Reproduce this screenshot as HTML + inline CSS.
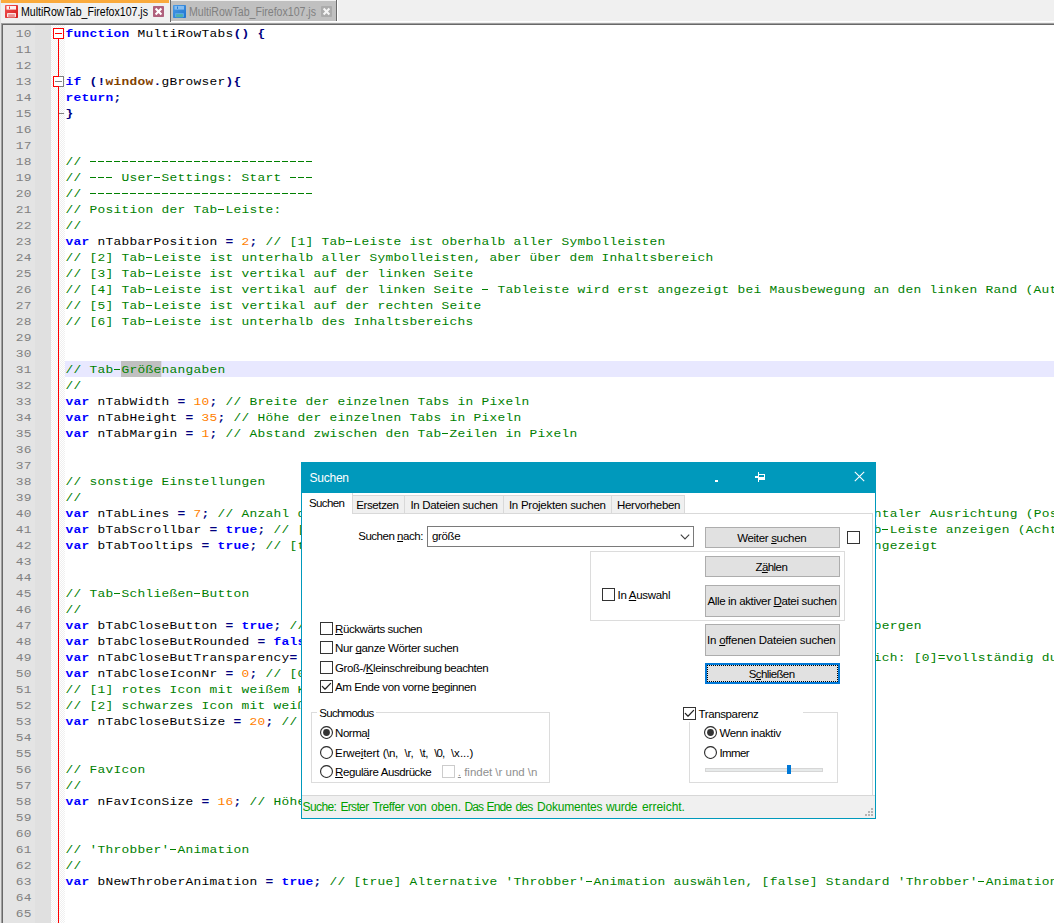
<!DOCTYPE html>
<html lang="de">
<head>
<meta charset="utf-8">
<title>MultiRowTab_Firefox107.js - Notepad++</title>
<style>
html,body{margin:0;padding:0;}
body{width:1054px;height:923px;overflow:hidden;background:#f0f0f0;font-family:"Liberation Sans",sans-serif;}
#app{position:relative;width:1054px;height:923px;overflow:hidden;background:#f0f0f0;}
#app *{box-sizing:border-box;}

/* ---------- document tab bar ---------- */
#tabbar{position:absolute;left:0;top:0;width:1054px;height:23px;background:#f0f0f0;}
#tabbar .edge{position:absolute;left:0;top:0;width:1px;height:923px;background:#e3e3e3;}
.dtab{position:absolute;top:0;height:22px;font-size:12px;white-space:nowrap;}
.dtab .lbl{position:absolute;top:5.8px;line-height:13px;transform-origin:0 50%;transform:scaleX(0.8815);}
#dt1{left:1px;width:169px;background:#f0f0f0;}
#dt1 .bar{position:absolute;left:0;top:0;width:168px;height:3px;background:#faaa3c;}
#dt1 .lbl{left:20px;color:#000;}
#dt2{left:171px;width:165px;background:#c0c0c0;top:1px;height:20px;}
#dt2 .lbl{left:18px;top:4.8px;color:#808080;}
.sep{position:absolute;top:0;width:1px;height:22px;background:#696969;}
.floppy{position:absolute;width:13px;height:13px;}
.xbtn{position:absolute;width:11px;height:11px;}

/* ---------- editor ---------- */
#editor{position:absolute;left:1px;top:23px;width:1060px;height:910px;border-left:1px solid #a0a0a0;border-top:1px solid #a0a0a0;background:#fff;}
#editor:before{content:"";position:absolute;left:0;top:0;width:1060px;height:910px;border-left:1px solid #696969;border-top:1px solid #696969;pointer-events:none;z-index:3;}
#numbers{position:absolute;left:1px;top:1px;width:32px;height:900px;background:#e4e4e4;}
#bookmark{position:absolute;left:33px;top:1px;width:16px;height:900px;background:#e0e0e0;}
#fold{position:absolute;left:49px;top:1px;width:14px;height:900px;background-color:#fff;
  background-image:linear-gradient(45deg,#f0f0f0 25%,transparent 25%,transparent 75%,#f0f0f0 75%),linear-gradient(45deg,#f0f0f0 25%,transparent 25%,transparent 75%,#f0f0f0 75%);
  background-size:2px 2px;background-position:0 0,1px 1px;}
#fold .vline{position:absolute;left:7px;top:14px;width:1px;height:890px;background:#ff0000;}
.fbox{position:absolute;left:2px;width:11px;height:11px;border:1px solid #ff0000;background:#fff;}
.fbox i{position:absolute;left:1px;top:4px;width:7px;height:1px;background:#ff0000;}
.fbox.g{border-color:#808080;}
.fbox.g i{background:#808080;}
.fbox.g b{position:absolute;left:-1px;top:-1px;width:6px;height:11px;border:1px solid #ff0000;border-right:none;}
.ftail{position:absolute;left:7px;width:5px;height:1px;background:#808080;}
#code{position:absolute;left:63px;top:1px;width:1000px;height:900px;}
.no,.ln{position:absolute;height:16px;line-height:18px;font-family:"Liberation Mono",monospace;font-size:11.5px;letter-spacing:0.243px;white-space:pre;transform:scaleX(1.12);}
.no{left:0;width:28.8px;text-align:right;color:#808080;transform-origin:100% 0;}
.ln{left:0;width:1000px;padding-left:0.4px;color:#000;transform-origin:0 0;}
.ln.cur{background:#e8e8ff;}
.k{color:#0000ff;font-weight:bold;}
.o{color:#000080;font-weight:bold;}
.n{color:#ff8000;}
.c{color:#008000;}
.w{color:#804000;font-weight:bold;}
.selbox{position:absolute;left:50px;top:0;width:35.71px;height:16px;background:#c0c0c0;}
.ln span{position:relative;}

/* ---------- "Suchen" dialog ---------- */
#dlg{position:absolute;left:301px;top:462px;width:575px;height:357px;background:#fff;z-index:10;overflow:hidden;}
#dlg .abs{position:absolute;}
#dlg .t{position:absolute;white-space:pre;line-height:14px;}
#dlg u{text-decoration:underline;text-underline-offset:1px;text-decoration-thickness:1px;text-decoration-skip-ink:none;}
.dash{position:absolute;height:1px;background:repeating-linear-gradient(to right,transparent 0,transparent 0.6px,#008000 0.6px,#008000 7.4px,transparent 7.4px,transparent 8px);}

</style>
</head>
<body>
<div id="app">
<div id="tabbar">
<div class="edge"></div>
<div class="dtab" id="dt1">
<div class="bar"></div>
<svg class="floppy" style="left:4px;top:5px" viewBox="0 0 13 13">
<defs><linearGradient id="gr" x1="0" y1="0" x2="1" y2="1"><stop offset="0" stop-color="#f25555"/><stop offset="1" stop-color="#d41818"/></linearGradient></defs>
<rect x="0" y="0" width="13" height="13" rx="0.8" fill="url(#gr)"/>
<rect x="1.5" y="1" width="9.5" height="3.6" fill="#fff" opacity="0.93"/>
<rect x="4" y="1.5" width="1" height="2.4" fill="#ec3a3a"/>
<rect x="2" y="8" width="9" height="4.2" rx="0.8" fill="#fbe3e3"/>
<rect x="3.2" y="9.2" width="6.6" height="3" fill="#eb9090"/>
</svg>
<span class="lbl" id="dl1">MultiRowTab_Firefox107.js</span>
<svg class="xbtn" style="left:152px;top:6px" viewBox="0 0 11 11">
<rect x="0" y="0" width="11" height="11" rx="0.8" fill="#b0607c"/>
<path d="M2.6 2.6 L8.4 8.4 M8.4 2.6 L2.6 8.4" stroke="#fff" stroke-width="2.1" stroke-linecap="butt"/>
</svg>
</div>
<div class="sep" style="left:170px"></div>
<div class="dtab" id="dt2">
<svg class="floppy" style="left:2px;top:4px" viewBox="0 0 13 13">
<defs><linearGradient id="gb" x1="0" y1="0" x2="1" y2="1"><stop offset="0" stop-color="#4a9be6"/><stop offset="1" stop-color="#1f74cf"/></linearGradient></defs>
<rect x="0" y="0" width="13" height="13" rx="0.8" fill="url(#gb)"/>
<rect x="1.5" y="1" width="9.5" height="3.6" fill="#86bdf0"/>
<rect x="4" y="1.5" width="1" height="2.4" fill="#2a7fd6"/>
<rect x="2" y="8" width="9" height="4.2" rx="0.8" fill="#5aa6e6"/>
<rect x="3.2" y="9.2" width="6.6" height="3" fill="#4fb0a8"/>
</svg>
<span class="lbl" id="dl2">MultiRowTab_Firefox107.js</span>
<svg class="xbtn" style="left:150px;top:5px" viewBox="0 0 11 11">
<rect x="0" y="0" width="11" height="11" rx="1" fill="#ababab"/>
<path d="M2.6 2.6 L8.4 8.4 M8.4 2.6 L2.6 8.4" stroke="#f4f4f4" stroke-width="2.1" stroke-linecap="butt"/>
</svg>
</div>
<div class="sep" style="left:336px;height:21px"></div>
<div style="position:absolute;left:337px;top:0;width:1px;height:22px;background:#fff"></div>
<div style="position:absolute;left:171px;top:21px;width:883px;height:1px;background:#fff"></div>
</div>

<div id="editor">
<div id="numbers">
<div class="no" style="top:0px">10</div>
<div class="no" style="top:16px">11</div>
<div class="no" style="top:32px">12</div>
<div class="no" style="top:48px">13</div>
<div class="no" style="top:64px">14</div>
<div class="no" style="top:80px">15</div>
<div class="no" style="top:96px">16</div>
<div class="no" style="top:112px">17</div>
<div class="no" style="top:128px">18</div>
<div class="no" style="top:144px">19</div>
<div class="no" style="top:160px">20</div>
<div class="no" style="top:176px">21</div>
<div class="no" style="top:192px">22</div>
<div class="no" style="top:208px">23</div>
<div class="no" style="top:224px">24</div>
<div class="no" style="top:240px">25</div>
<div class="no" style="top:256px">26</div>
<div class="no" style="top:272px">27</div>
<div class="no" style="top:288px">28</div>
<div class="no" style="top:304px">29</div>
<div class="no" style="top:320px">30</div>
<div class="no" style="top:336px">31</div>
<div class="no" style="top:352px">32</div>
<div class="no" style="top:368px">33</div>
<div class="no" style="top:384px">34</div>
<div class="no" style="top:400px">35</div>
<div class="no" style="top:416px">36</div>
<div class="no" style="top:432px">37</div>
<div class="no" style="top:448px">38</div>
<div class="no" style="top:464px">39</div>
<div class="no" style="top:480px">40</div>
<div class="no" style="top:496px">41</div>
<div class="no" style="top:512px">42</div>
<div class="no" style="top:528px">43</div>
<div class="no" style="top:544px">44</div>
<div class="no" style="top:560px">45</div>
<div class="no" style="top:576px">46</div>
<div class="no" style="top:592px">47</div>
<div class="no" style="top:608px">48</div>
<div class="no" style="top:624px">49</div>
<div class="no" style="top:640px">50</div>
<div class="no" style="top:656px">51</div>
<div class="no" style="top:672px">52</div>
<div class="no" style="top:688px">53</div>
<div class="no" style="top:704px">54</div>
<div class="no" style="top:720px">55</div>
<div class="no" style="top:736px">56</div>
<div class="no" style="top:752px">57</div>
<div class="no" style="top:768px">58</div>
<div class="no" style="top:784px">59</div>
<div class="no" style="top:800px">60</div>
<div class="no" style="top:816px">61</div>
<div class="no" style="top:832px">62</div>
<div class="no" style="top:848px">63</div>
<div class="no" style="top:864px">64</div>
<div class="no" style="top:880px">65</div>
<div class="no" style="top:896px">66</div>
</div>
<div id="bookmark"></div>
<div id="fold">
<div class="vline"></div>
<div class="fbox" style="top:3px"><i></i></div>
<div class="fbox g" style="top:51px"><i></i><b></b></div>
<div class="ftail" style="top:88px;left:8px"></div>
</div>
<div id="code">
<div class="ln" style="top:0px"><span class="k">function</span> MultiRowTabs<span class="o">()</span> <span class="o">{</span></div>
<div class="ln" style="top:16px"></div>
<div class="ln" style="top:32px"></div>
<div class="ln" style="top:48px"><span class="k">if</span> <span class="o">(!</span><span class="w">window</span><span class="o">.</span>gBrowser<span class="o">){</span></div>
<div class="ln" style="top:64px"><span class="k">return</span><span class="o">;</span></div>
<div class="ln" style="top:80px"><span class="o">}</span></div>
<div class="ln" style="top:96px"></div>
<div class="ln" style="top:112px"></div>
<div class="ln" style="top:128px"><span class="c">//                             </span></div>
<div class="ln" style="top:144px"><span class="c">//     User Settings: Start    </span></div>
<div class="ln" style="top:160px"><span class="c">//                             </span></div>
<div class="ln" style="top:176px"><span class="c">// Position der Tab Leiste:</span></div>
<div class="ln" style="top:192px"><span class="c">//</span></div>
<div class="ln" style="top:208px"><span class="k">var</span> nTabbarPosition <span class="o">=</span> <span class="n">2</span><span class="o">;</span> <span class="c">// [1] Tab Leiste ist oberhalb aller Symbolleisten</span></div>
<div class="ln" style="top:224px"><span class="c">// [2] Tab Leiste ist unterhalb aller Symbolleisten, aber über dem Inhaltsbereich</span></div>
<div class="ln" style="top:240px"><span class="c">// [3] Tab Leiste ist vertikal auf der linken Seite</span></div>
<div class="ln" style="top:256px"><span class="c">// [4] Tab Leiste ist vertikal auf der linken Seite   Tableiste wird erst angezeigt bei Mausbewegung an den linken Rand (Auto Hide)</span></div>
<div class="ln" style="top:272px"><span class="c">// [5] Tab Leiste ist vertikal auf der rechten Seite</span></div>
<div class="ln" style="top:288px"><span class="c">// [6] Tab Leiste ist unterhalb des Inhaltsbereichs</span></div>
<div class="ln" style="top:304px"></div>
<div class="ln" style="top:320px"></div>
<div class="ln cur" style="top:336px"><div class="selbox"></div><span class="c">// Tab Größenangaben</span></div>
<div class="ln" style="top:352px"><span class="c">//</span></div>
<div class="ln" style="top:368px"><span class="k">var</span> nTabWidth <span class="o">=</span> <span class="n">10</span><span class="o">;</span> <span class="c">// Breite der einzelnen Tabs in Pixeln</span></div>
<div class="ln" style="top:384px"><span class="k">var</span> nTabHeight <span class="o">=</span> <span class="n">35</span><span class="o">;</span> <span class="c">// Höhe der einzelnen Tabs in Pixeln</span></div>
<div class="ln" style="top:400px"><span class="k">var</span> nTabMargin <span class="o">=</span> <span class="n">1</span><span class="o">;</span> <span class="c">// Abstand zwischen den Tab Zeilen in Pixeln</span></div>
<div class="ln" style="top:416px"></div>
<div class="ln" style="top:432px"></div>
<div class="ln" style="top:448px"><span class="c">// sonstige Einstellungen</span></div>
<div class="ln" style="top:464px"><span class="c">//</span></div>
<div class="ln" style="top:480px"><span class="k">var</span> nTabLines <span class="o">=</span> <span class="n">7</span><span class="o">;</span> <span class="c">// Anzahl der Tab Zeilen                                                    horizontaler Ausrichtung (Position 1 und 2)</span></div>
<div class="ln" style="top:496px"><span class="k">var</span> bTabScrollbar <span class="o">=</span> <span class="k">true</span><span class="o">;</span> <span class="c">// [true] Scrollbar                                                      Tab Leiste anzeigen (Achtung: nur bei)</span></div>
<div class="ln" style="top:512px"><span class="k">var</span> bTabTooltips <span class="o">=</span> <span class="k">true</span><span class="o">;</span> <span class="c">// [true] Tooltips                                                         angezeigt</span></div>
<div class="ln" style="top:528px"></div>
<div class="ln" style="top:544px"></div>
<div class="ln" style="top:560px"><span class="c">// Tab Schließen Button</span></div>
<div class="ln" style="top:576px"><span class="c">//</span></div>
<div class="ln" style="top:592px"><span class="k">var</span> bTabCloseButton <span class="o">=</span> <span class="k">true</span><span class="o">;</span> <span class="c">// [true]                                                             verbergen</span></div>
<div class="ln" style="top:608px"><span class="k">var</span> bTabCloseButRounded <span class="o">=</span> <span class="k">false</span><span class="o">;</span> <span class="c">// [true]</span></div>
<div class="ln" style="top:624px"><span class="k">var</span> nTabCloseButTransparency<span class="o">=</span> <span class="n">9</span><span class="o">;</span> <span class="c">// Transparenz                                                  Bereich: [0]=vollständig durchsichtig</span></div>
<div class="ln" style="top:640px"><span class="k">var</span> nTabCloseIconNr <span class="o">=</span> <span class="n">0</span><span class="o">;</span> <span class="c">// [0] Standard</span></div>
<div class="ln" style="top:656px"><span class="c">// [1] rotes Icon mit weißem Kreuz</span></div>
<div class="ln" style="top:672px"><span class="c">// [2] schwarzes Icon mit weißem Kreuz</span></div>
<div class="ln" style="top:688px"><span class="k">var</span> nTabCloseButSize <span class="o">=</span> <span class="n">20</span><span class="o">;</span> <span class="c">// Größe</span></div>
<div class="ln" style="top:704px"></div>
<div class="ln" style="top:720px"></div>
<div class="ln" style="top:736px"><span class="c">// FavIcon</span></div>
<div class="ln" style="top:752px"><span class="c">//</span></div>
<div class="ln" style="top:768px"><span class="k">var</span> nFavIconSize <span class="o">=</span> <span class="n">16</span><span class="o">;</span> <span class="c">// Höhe und Breite</span></div>
<div class="ln" style="top:784px"></div>
<div class="ln" style="top:800px"></div>
<div class="ln" style="top:816px"><span class="c">// 'Throbber' Animation</span></div>
<div class="ln" style="top:832px"><span class="c">//</span></div>
<div class="ln" style="top:848px"><span class="k">var</span> bNewThroberAnimation <span class="o">=</span> <span class="k">true</span><span class="o">;</span> <span class="c">// [true] Alternative 'Throbber' Animation auswählen, [false] Standard 'Throbber' Animation</span></div>
<div class="ln" style="top:864px"></div>
<div class="ln" style="top:880px"></div>
<div class="ln" style="top:896px"></div>
<div class="dash" style="left:24px;top:136px;width:224px"></div>
<div class="dash" style="left:24px;top:152px;width:24px"></div>
<div class="dash" style="left:88px;top:152px;width:8px"></div>
<div class="dash" style="left:224px;top:152px;width:24px"></div>
<div class="dash" style="left:24px;top:168px;width:224px"></div>
<div class="dash" style="left:152px;top:184px;width:8px"></div>
<div class="dash" style="left:280px;top:216px;width:8px"></div>
<div class="dash" style="left:80px;top:232px;width:8px"></div>
<div class="dash" style="left:80px;top:248px;width:8px"></div>
<div class="dash" style="left:80px;top:264px;width:8px"></div>
<div class="dash" style="left:416px;top:264px;width:8px"></div>
<div class="dash" style="left:1000px;top:264px;width:8px"></div>
<div class="dash" style="left:80px;top:280px;width:8px"></div>
<div class="dash" style="left:80px;top:296px;width:8px"></div>
<div class="dash" style="left:48px;top:344px;width:8px"></div>
<div class="dash" style="left:376px;top:408px;width:8px"></div>
<div class="dash" style="left:288px;top:488px;width:8px"></div>
<div class="dash" style="left:816px;top:504px;width:8px"></div>
<div class="dash" style="left:48px;top:568px;width:8px"></div>
<div class="dash" style="left:128px;top:568px;width:8px"></div>
<div class="dash" style="left:104px;top:824px;width:8px"></div>
<div class="dash" style="left:520px;top:856px;width:8px"></div>
<div class="dash" style="left:912px;top:856px;width:8px"></div>
</div>
</div>
<div id="dlg">
<div class="abs" style="left:0px;top:0px;width:575px;height:31px;background:#0099bc;"></div>
<span class="t" id="t_title" style="left:8.60px;top:8.84px;font-size:12px;color:#fff;letter-spacing:-0.251px;">Suchen</span>
<div class="abs" style="left:414px;top:18px;width:3px;height:2px;background:#fff;"></div>
<svg class="abs" viewBox="0 0 11 11" width="11" height="11" style="left:454px;top:10px" shape-rendering="crispEdges"><rect x="3" y="0" width="1" height="10" fill="#fff"/><rect x="0" y="4" width="3" height="2" fill="#fff"/><rect x="4" y="2" width="6" height="1" fill="#fff"/><rect x="9" y="2" width="1" height="6" fill="#fff"/><rect x="4" y="5" width="6" height="3" fill="#fff"/></svg>
<svg class="abs" viewBox="0 0 11 11" width="11" height="11" style="left:553px;top:9px"><path d="M0.8 0.8 L10.2 10.2 M10.2 0.8 L0.8 10.2" stroke="#fff" stroke-width="1.1" fill="none"/></svg>
<div class="abs" style="left:51px;top:33px;width:333px;height:19px;background:#f0f0f0;border-top:1px solid #d9d9d9;"></div>
<div class="abs" style="left:103px;top:33px;width:1px;height:19px;background:#d9d9d9;"></div>
<div class="abs" style="left:202px;top:33px;width:1px;height:19px;background:#d9d9d9;"></div>
<div class="abs" style="left:310px;top:33px;width:1px;height:19px;background:#d9d9d9;"></div>
<div class="abs" style="left:383px;top:33px;width:1px;height:19px;background:#d9d9d9;"></div>
<div class="abs" style="left:51px;top:31px;width:1px;height:21px;background:#d9d9d9;"></div>
<div class="abs" style="left:51px;top:51px;width:521px;height:1px;background:#d9d9d9;"></div>
<div class="abs" style="left:571px;top:51px;width:1px;height:283px;background:#d9d9d9;"></div>
<span class="t" id="t_tab1" style="left:8.00px;top:34.02px;font-size:11.5px;color:#000;letter-spacing:-0.603px;">Suchen</span>
<span class="t" id="t_tab2" style="left:55.30px;top:36.02px;font-size:11.5px;color:#000;letter-spacing:-0.399px;">Ersetzen</span>
<span class="t" id="t_tab3" style="left:109.40px;top:36.02px;font-size:11.5px;color:#000;letter-spacing:-0.324px;">In Dateien suchen</span>
<span class="t" id="t_tab4" style="left:207.90px;top:36.02px;font-size:11.5px;color:#000;letter-spacing:-0.256px;">In Projekten suchen</span>
<span class="t" id="t_tab5" style="left:316.00px;top:36.02px;font-size:11.5px;color:#000;letter-spacing:-0.299px;">Hervorheben</span>
<span class="t" id="t_lbl" style="left:57.20px;top:67.02px;font-size:11.5px;color:#000;letter-spacing:-0.472px;">Suchen <u>n</u>ach:</span>
<div class="abs" style="left:126px;top:64px;width:267px;height:21px;border:1px solid #7a7a7a;background:#fff;"><svg viewBox="0 0 10 6" width="10" height="6" style="position:absolute;left:252px;top:6.6px"><path d="M0.8 0.7 L5 4.9 L9.2 0.7" fill="none" stroke="#404040" stroke-width="1.1"/></svg></div>
<span class="t" id="t_val" style="left:131.10px;top:67.02px;font-size:11.5px;color:#000;letter-spacing:-0.389px;">größe</span>
<div class="abs" style="left:404px;top:65px;width:135px;height:21px;border:1px solid #adadad;background:#e1e1e1;"></div>
<span class="t" id="b_next" style="left:436.20px;top:69.02px;font-size:11.5px;color:#000;letter-spacing:-0.324px;">Weiter <u>s</u>uchen</span>
<div class="abs" style="left:546px;top:69px;width:13px;height:13px;border:1px solid #333333;background:#fff;"></div>
<div class="abs" style="left:289px;top:89px;width:255px;height:70px;border:1px solid #dcdcdc;"></div>
<div class="abs" style="left:301px;top:126px;width:13px;height:13px;border:1px solid #333333;background:#fff;"></div>
<span class="t" id="t_insel" style="left:316.50px;top:126.02px;font-size:11.5px;color:#000;letter-spacing:-0.294px;">In <u>A</u>uswahl</span>
<div class="abs" style="left:404px;top:94px;width:135px;height:21px;border:1px solid #adadad;background:#e1e1e1;"></div>
<span class="t" id="b_count" style="left:454.40px;top:98.02px;font-size:11.5px;color:#000;letter-spacing:-0.548px;">Z<u>ä</u>hlen</span>
<div class="abs" style="left:404px;top:123px;width:135px;height:32px;border:1px solid #adadad;background:#e1e1e1;"></div>
<span class="t" id="b_all" style="left:406.40px;top:132.02px;font-size:11.5px;color:#000;letter-spacing:-0.344px;">Alle in aktiver <u>D</u>atei suchen</span>
<div class="abs" style="left:404px;top:162px;width:135px;height:32px;border:1px solid #adadad;background:#e1e1e1;"></div>
<span class="t" id="b_open" style="left:406.00px;top:171.02px;font-size:11.5px;color:#000;letter-spacing:-0.224px;">In <u>o</u>ffenen Dateien suchen</span>
<div class="abs" style="left:404px;top:201px;width:135px;height:21px;border:2px solid #0078d7;background:#e1e1e1;"><div class="abs" style="left:0;top:0;right:0;bottom:0;border:1px dotted #000;"></div></div>
<span class="t" id="b_close" style="left:447.80px;top:205.02px;font-size:11.5px;color:#000;letter-spacing:-0.616px;">S<u>c</u>hließen</span>
<div class="abs" style="left:19px;top:160px;width:13px;height:13px;border:1px solid #333333;background:#fff;"></div>
<span class="t" id="t_c1" style="left:34.10px;top:160.02px;font-size:11.5px;color:#000;letter-spacing:-0.442px;"><u>R</u>ückwärts suchen</span>
<div class="abs" style="left:19px;top:179px;width:13px;height:13px;border:1px solid #333333;background:#fff;"></div>
<span class="t" id="t_c2" style="left:34.10px;top:179.02px;font-size:11.5px;color:#000;letter-spacing:-0.338px;">Nur <u>g</u>anze Wörter suchen</span>
<div class="abs" style="left:19px;top:199px;width:13px;height:13px;border:1px solid #333333;background:#fff;"></div>
<span class="t" id="t_c3" style="left:34.10px;top:199.02px;font-size:11.5px;color:#000;letter-spacing:-0.416px;">Groß-/<u>K</u>leinschreibung beachten</span>
<div class="abs" style="left:19px;top:218px;width:13px;height:13px;border:1px solid #333333;background:#fff;"><svg viewBox="0 0 13 13" width="13" height="13" style="position:absolute;left:-1px;top:-1px"><path d="M2.3 6.4 L5.0 9.2 L10.6 3.4" fill="none" stroke="#222" stroke-width="1.25" stroke-linecap="round" stroke-linejoin="round"/></svg></div>
<span class="t" id="t_c4" style="left:34.10px;top:218.02px;font-size:11.5px;color:#000;letter-spacing:-0.406px;">Am Ende von vorne <u>b</u>eginnen</span>
<div class="abs" style="left:10px;top:250px;width:239px;height:71px;border:1px solid #dcdcdc;"></div>
<div class="abs" style="left:16px;top:246px;width:59px;height:12px;background:#fff;"></div>
<span class="t" id="t_gm" style="left:18.30px;top:244.02px;font-size:11.5px;color:#000;letter-spacing:-0.737px;">Suchmodus</span>
<svg class="abs" viewBox="0 0 13 13" width="13" height="13" style="left:19px;top:264px"><circle cx="6.5" cy="6.5" r="5.95" fill="#fff" stroke="#333" stroke-width="1.15"/><circle cx="6.5" cy="6.5" r="3.4" fill="#333"/></svg>
<span class="t" id="t_r1" style="left:34.10px;top:264.02px;font-size:11.5px;color:#000;letter-spacing:-0.496px;">Norma<u>l</u></span>
<svg class="abs" viewBox="0 0 13 13" width="13" height="13" style="left:19px;top:284px"><circle cx="6.5" cy="6.5" r="5.95" fill="#fff" stroke="#333" stroke-width="1.15"/></svg>
<span class="t" id="t_r2_0" style="left:34.10px;top:284.02px;font-size:11.5px;color:#000;letter-spacing:-0.121px;">Erwe<u>i</u>tert</span>
<span class="t" id="t_r2_1" style="left:81.80px;top:284.02px;font-size:11.5px;color:#000;letter-spacing:-0.431px;">(\n,</span>
<span class="t" id="t_r2_2" style="left:103.40px;top:284.02px;font-size:11.5px;color:#000;letter-spacing:-0.131px;">\r,</span>
<span class="t" id="t_r2_3" style="left:118.80px;top:284.02px;font-size:11.5px;color:#000;letter-spacing:-0.465px;">\t,</span>
<span class="t" id="t_r2_4" style="left:133.20px;top:284.02px;font-size:11.5px;color:#000;letter-spacing:-0.866px;">\0,</span>
<span class="t" id="t_r2_5" style="left:149.90px;top:284.02px;font-size:11.5px;color:#000;letter-spacing:0.021px;">\x...)</span>
<svg class="abs" viewBox="0 0 13 13" width="13" height="13" style="left:19px;top:303px"><circle cx="6.5" cy="6.5" r="5.95" fill="#fff" stroke="#333" stroke-width="1.15"/></svg>
<span class="t" id="t_r3" style="left:34.10px;top:303.02px;font-size:11.5px;color:#000;letter-spacing:-0.410px;"><u>R</u>eguläre Ausdrücke</span>
<div class="abs" style="left:141px;top:303px;width:13px;height:13px;border:1px solid #cccccc;background:#fff;"></div>
<span class="t" id="t_dot" style="left:156.80px;top:303.02px;font-size:11.5px;color:#8f8f8f;letter-spacing:-0.018px;"><u>.</u> findet \r und \n</span>
<div class="abs" style="left:388px;top:250px;width:149px;height:71px;border:1px solid #dcdcdc;"></div>
<div class="abs" style="left:381px;top:243px;width:121px;height:17px;background:#fff;"></div>
<div class="abs" style="left:382px;top:245px;width:13px;height:13px;border:1px solid #333333;background:#fff;"><svg viewBox="0 0 13 13" width="13" height="13" style="position:absolute;left:-1px;top:-1px"><path d="M2.3 6.4 L5.0 9.2 L10.6 3.4" fill="none" stroke="#222" stroke-width="1.25" stroke-linecap="round" stroke-linejoin="round"/></svg></div>
<span class="t" id="t_tr" style="left:397.50px;top:245.02px;font-size:11.5px;color:#000;letter-spacing:-0.376px;">Transparenz</span>
<svg class="abs" viewBox="0 0 13 13" width="13" height="13" style="left:403px;top:264px"><circle cx="6.5" cy="6.5" r="5.95" fill="#fff" stroke="#333" stroke-width="1.15"/><circle cx="6.5" cy="6.5" r="3.4" fill="#333"/></svg>
<span class="t" id="t_tr1" style="left:418.40px;top:264.02px;font-size:11.5px;color:#000;letter-spacing:-0.353px;">Wenn inaktiv</span>
<svg class="abs" viewBox="0 0 13 13" width="13" height="13" style="left:403px;top:284px"><circle cx="6.5" cy="6.5" r="5.95" fill="#fff" stroke="#333" stroke-width="1.15"/></svg>
<span class="t" id="t_tr2" style="left:418.40px;top:284.02px;font-size:11.5px;color:#000;letter-spacing:-0.619px;">Immer</span>
<div class="abs" style="left:404px;top:306px;width:118px;height:4px;background:#e7eaea;border:1px solid #d6d6d6;"></div>
<div class="abs" style="left:486px;top:303px;width:4px;height:9px;background:#0078d7;"></div>
<div class="abs" style="left:1px;top:333px;width:573px;height:23px;background:#f0f0f0;border-top:1px solid #d7d7d7;"></div>
<span class="t" id="t_st0" style="left:1.60px;top:337.84px;font-size:12px;color:#00a000;letter-spacing:-0.627px;">Suche:</span>
<span class="t" id="t_st1" style="left:39.40px;top:337.84px;font-size:12px;color:#00a000;letter-spacing:-0.653px;">Erster</span>
<span class="t" id="t_st2" style="left:71.60px;top:337.84px;font-size:12px;color:#00a000;letter-spacing:-0.441px;">Treffer</span>
<span class="t" id="t_st3" style="left:107.10px;top:337.84px;font-size:12px;color:#00a000;letter-spacing:-0.353px;">von</span>
<span class="t" id="t_st4" style="left:129.90px;top:337.84px;font-size:12px;color:#00a000;letter-spacing:0.054px;">oben.</span>
<span class="t" id="t_st5" style="left:163.60px;top:337.84px;font-size:12px;color:#00a000;letter-spacing:-0.915px;">Das</span>
<span class="t" id="t_st6" style="left:185.40px;top:337.84px;font-size:12px;color:#00a000;letter-spacing:-0.733px;">Ende</span>
<span class="t" id="t_st7" style="left:214.50px;top:337.84px;font-size:12px;color:#00a000;letter-spacing:-0.820px;">des</span>
<span class="t" id="t_st8" style="left:236.00px;top:337.84px;font-size:12px;color:#00a000;letter-spacing:-0.207px;">Dokumentes</span>
<span class="t" id="t_st9" style="left:304.90px;top:337.84px;font-size:12px;color:#00a000;letter-spacing:-0.277px;">wurde</span>
<span class="t" id="t_st10" style="left:341.00px;top:337.84px;font-size:12px;color:#00a000;letter-spacing:-0.062px;">erreicht.</span>
<div class="abs" style="left:570px;top:346px;width:2px;height:2px;background:#b4b4b4;"></div>
<div class="abs" style="left:567px;top:349px;width:2px;height:2px;background:#b4b4b4;"></div>
<div class="abs" style="left:570px;top:349px;width:2px;height:2px;background:#b4b4b4;"></div>
<div class="abs" style="left:564px;top:352px;width:2px;height:2px;background:#b4b4b4;"></div>
<div class="abs" style="left:567px;top:352px;width:2px;height:2px;background:#b4b4b4;"></div>
<div class="abs" style="left:570px;top:352px;width:2px;height:2px;background:#b4b4b4;"></div>
<div class="abs" style="left:0;top:0;width:575px;height:357px;border:1px solid #0099bc;"></div>
</div>

</div>
</body>
</html>
